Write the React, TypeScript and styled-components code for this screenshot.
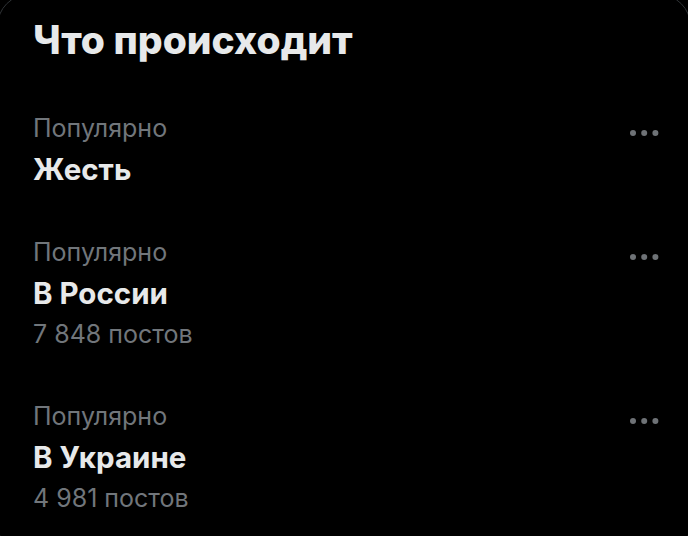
import { FC } from 'react'
import styled, { createGlobalStyle } from 'styled-components'

type Trend = {
  id: string
  context: string
  title: string
  posts?: string
}

const TRENDS: Trend[] = [
  { id: 'zhest', context: 'Популярно', title: 'Жесть' },
  { id: 'russia', context: 'Популярно', title: 'В России', posts: '7 848 постов' },
  { id: 'ukraine', context: 'Популярно', title: 'В Украине', posts: '4 981 постов' },
]

const MoreIcon: FC = () => (
  <svg width="30" height="8" viewBox="0 0 30 8" aria-hidden="true">
    <circle cx="3" cy="4" r="3" />
    <circle cx="14.2" cy="4" r="3" />
    <circle cx="25.4" cy="4" r="3" />
  </svg>
)

export default function App() {
  return (
    <>
      <GlobalStyle />
      <Card>
        <Heading>Что происходит</Heading>
        {TRENDS.map((trend) => (
          <Item key={trend.id}>
            <TopRow>
              <Context>{trend.context}</Context>
              <MoreButton aria-label="Ещё">
                <MoreIcon />
              </MoreButton>
            </TopRow>
            <Title>{trend.title}</Title>
            {trend.posts && <Count>{trend.posts}</Count>}
          </Item>
        ))}
      </Card>
    </>
  )
}

// Styles

const GlobalStyle = createGlobalStyle`
  html, body {
    margin: 0;
    padding: 0;
    background: #000;
    overflow: hidden;
  }
  body {
    width: 688px;
    height: 536px;
    font-family: Inter, "Noto Sans", sans-serif;
    -webkit-font-smoothing: antialiased;
  }
`

const Card = styled.section`
  margin: -6px -3px 0 -3px;
  height: 560px;
  border: 1px solid #2f3336;
  border-radius: 32px;
  background: #000;
  overflow: hidden;
`

const Heading = styled.h2`
  margin: 0;
  padding: 21px 35px 23px;
  font-size: 39px;
  line-height: 48px;
  font-weight: 800;
  color: #e7e9ea;
`

const Item = styled.div`
  display: flex;
  flex-direction: column;
  padding: 21px 30px 21px 35px;
`

const TopRow = styled.div`
  display: flex;
  align-items: flex-start;
  justify-content: space-between;
`

const Context = styled.span`
  font-size: 25px;
  line-height: 40px;
  color: #71767b;
`

const MoreButton = styled.button`
  display: flex;
  align-items: center;
  height: 40px;
  padding: 10px 0 0;
  border: 0;
  background: none;
  color: #6e7276;
  fill: currentColor;
`

const Title = styled.span`
  font-size: 29.5px;
  line-height: 42px;
  font-weight: 700;
  color: #e7e9ea;
`

const Count = styled.span`
  font-size: 25px;
  line-height: 40px;
  color: #71767b;
`
